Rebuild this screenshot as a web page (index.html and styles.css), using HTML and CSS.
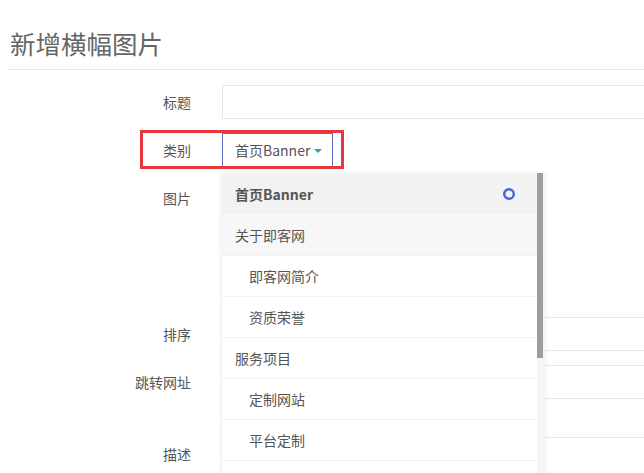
FILE: index.html
```html
<!DOCTYPE html>
<html lang="zh-CN">
<head>
<meta charset="utf-8">
<title>新增横幅图片</title>
<link rel="stylesheet" href="styles.css">
</head>
<body>
<div class="page">
  <h1 class="page-title">新增横幅图片</h1>
  <form class="form">
    <div class="row">
      <label class="lbl">标题</label>
      <input class="inp" type="text">
    </div>
    <div class="row row-cat">
      <label class="lbl">类别</label>
      <div class="select-wrap">
        <div class="select"><span>首页Banner</span><i class="caret"></i></div>
        <div class="dropdown">
          <ul class="options">
            <li class="opt opt-active"><span>首页Banner</span><svg class="radio" width="14" height="14" viewBox="0 0 14 14"><circle cx="7" cy="7" r="4.8" fill="none" stroke="#4f5fd8" stroke-width="2.4"/></svg></li>
            <li class="opt opt-group">关于即客网</li>
            <li class="opt opt-sub">即客网简介</li>
            <li class="opt opt-sub">资质荣誉</li>
            <li class="opt">服务项目</li>
            <li class="opt opt-sub">定制网站</li>
            <li class="opt opt-sub">平台定制</li>
            <li class="opt opt-sub"></li>
          </ul>
          <div class="scrollbar"><div class="thumb"></div></div>
        </div>
      </div>
      <div class="highlight"></div>
    </div>
    <div class="row row-img">
      <label class="lbl">图片</label>
      <div class="upload"></div>
    </div>
    <div class="row">
      <label class="lbl">排序</label>
      <input class="inp" type="text">
    </div>
    <div class="row">
      <label class="lbl">跳转网址</label>
      <div class="field">
        <input class="inp" type="text">
        <div class="hint"></div>
      </div>
    </div>
    <div class="row">
      <label class="lbl">描述</label>
      <textarea class="inp area"></textarea>
    </div>
  </form>
</div>
</body>
</html>
```

FILE: styles.css
```css
html, body {
  margin: 0;
  padding: 0;
  overflow: hidden;
  background: #fff;
}
body {
  font-family: "Noto Sans CJK SC", "Liberation Sans", sans-serif;
  font-size: 14px;
  color: #555;
}
.page {
  padding-left: 8px;
  margin-right: -40px;
}
.page-title {
  margin: 0;
  padding: 28px 0 11px 2px;
  font-size: 25.5px;
  line-height: 30px;
  font-weight: 400;
  color: #666;
  border-bottom: 1px solid #e6e6e6;
}
.form {
  padding-top: 15px;
}
.row {
  display: flex;
  align-items: flex-start;
  margin-bottom: 14px;
}
.lbl {
  flex: 0 0 183px;
  margin-right: 31px;
  text-align: right;
  line-height: 34px;
  color: #555;
}
.inp {
  flex: 1;
  height: 34px;
  box-sizing: border-box;
  border: 1px solid #e6e6e6;
  background: #fff;
  margin: 0;
  padding: 0 10px;
  font: inherit;
  outline: none;
}
.row-cat {
  position: relative;
}
.select-wrap {
  position: relative;
}
.select {
  width: 111px;
  height: 34px;
  box-sizing: border-box;
  border: 1px solid #5f6ccb;
  padding: 0 10px 0 12px;
  display: flex;
  align-items: center;
  justify-content: space-between;
  color: #555;
}
.caret {
  width: 0;
  height: 0;
  border-left: 4px solid transparent;
  border-right: 4px solid transparent;
  border-top: 4px solid #26a69a;
  margin-top: 2px;
}
.highlight {
  position: absolute;
  left: 132px;
  top: -3px;
  width: 204px;
  height: 39px;
  box-sizing: border-box;
  border: 3px solid #e5383e;
  pointer-events: none;
}
.dropdown {
  position: absolute;
  top: 40px;
  left: 0;
  width: 323px;
  height: 320px;
  display: flex;
  background: #fff;
  box-shadow: 0 1px 5px rgba(0, 0, 0, 0.1);
  z-index: 5;
}
.options {
  list-style: none;
  margin: 0;
  padding: 0;
  flex: 1;
}
.opt {
  height: 41px;
  box-sizing: border-box;
  padding: 0 21px 0 13px;
  display: flex;
  align-items: center;
  justify-content: space-between;
  border-top: 1px solid #f1f1f1;
  color: #555;
}
.opt-active {
  background: #f2f2f2;
  font-weight: 700;
  border-top: 0;
}
.opt-group {
  background: #f7f7f7;
  border-top: 0;
}
.opt-sub {
  padding-left: 27px;
}
.radio {
  display: block;
}
.scrollbar {
  flex: 0 0 8px;
  background: #f5f5f5;
}
.thumb {
  width: 6px;
  height: 185px;
  background: #9e9e9e;
}
.row-img {
  height: 122px;
}
.upload {
  width: 120px;
  height: 120px;
}
.field {
  flex: 1;
  display: flex;
  flex-direction: column;
}
.field .inp {
  flex: none;
  width: 100%;
}
.hint {
  height: 24px;
}
.area {
  height: 80px;
  resize: none;
}
```
